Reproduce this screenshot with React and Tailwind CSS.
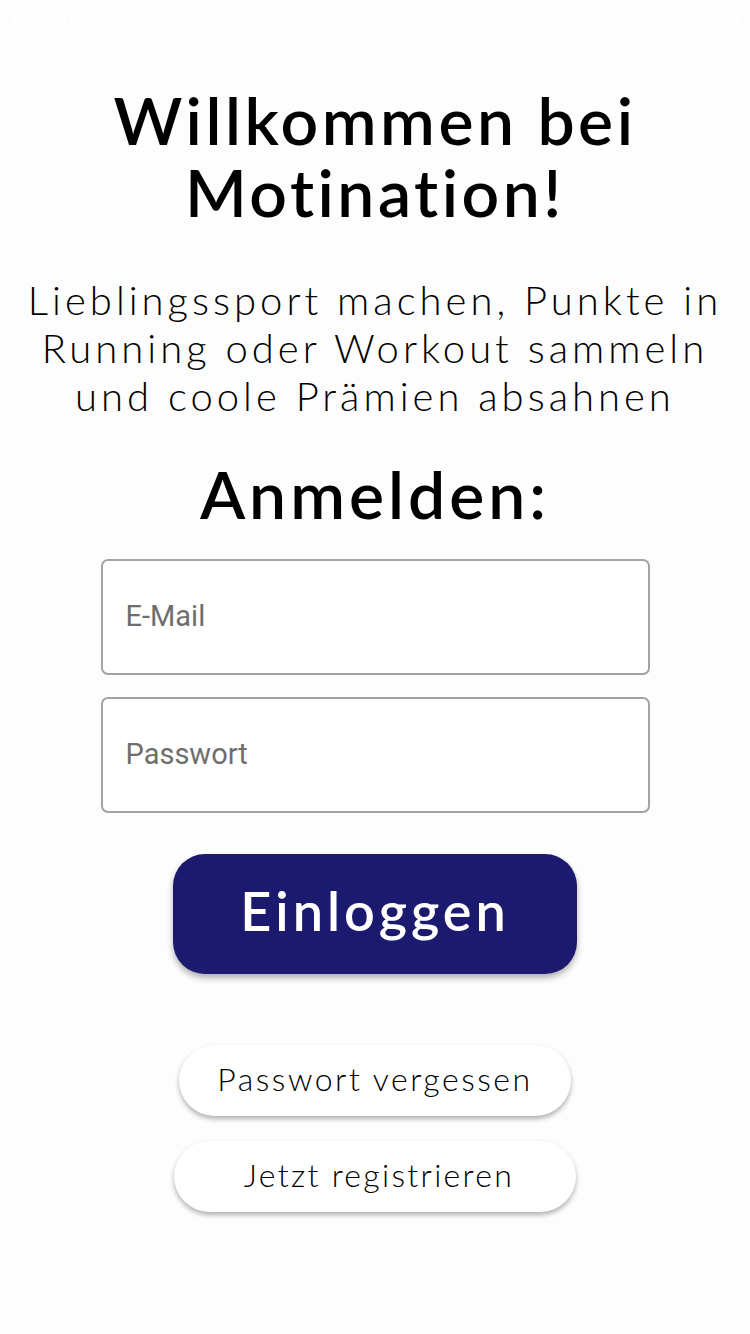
export default function App() {
  return (
    <div className="min-h-[1334px] w-[750px] bg-[#fdfdfd] flex flex-col items-center font-['Lato',sans-serif] text-black">
      {/* status bar (white on white) */}
      <div className="w-full h-10 flex items-center justify-between px-3 text-white text-[26px]">
        <span>Carrier</span>
        <span className="font-semibold">6:53 PM</span>
        <span className="w-12 h-5 border-2 border-white rounded" />
      </div>

      <h1 className="mt-[44px] text-center text-[66px] leading-[72px] font-semibold tracking-[3.5px]">
        Willkommen bei
        <br />
        Motination!
      </h1>

      <p className="mt-[48px] text-center text-[40px] leading-[48px] font-light tracking-[4px] whitespace-nowrap">
        Lieblingssport machen, Punkte in
        <br />
        Running oder Workout sammeln
        <br />
        und coole Prämien absahnen
      </p>

      <h2 className="mt-[38px] text-[66px] leading-[72px] font-semibold tracking-[4px]">Anmelden:</h2>

      <div className="mt-[29px] w-[549px] flex flex-col gap-[22px]">
        <div className="h-[116px] border-2 border-[#a3a3a3] rounded-[7px] flex items-center pl-[23px] bg-white">
          <span className="text-[29px] text-[#6e6e6e] font-['Roboto',sans-serif]">E-Mail</span>
        </div>
        <div className="h-[116px] border-2 border-[#a3a3a3] rounded-[7px] flex items-center pl-[23px] bg-white">
          <span className="text-[29px] text-[#6e6e6e] font-['Roboto',sans-serif]">Passwort</span>
        </div>
      </div>

      <button className="mt-[41px] w-[404px] h-[120px] pb-2 rounded-[32px] bg-[#1b1a6f] text-white text-[54px] font-semibold tracking-[4px] shadow-[0_4px_6px_rgba(0,0,0,0.3)]">
        Einloggen
      </button>

      <button className="mt-[71px] w-[392px] h-[71px] pb-1 rounded-full bg-white text-[32px] font-light tracking-[2.5px] shadow-[0_3px_5px_rgba(0,0,0,0.3)]">
        Passwort vergessen
      </button>

      <button className="mt-[25px] w-[402px] h-[71px] pb-1 pl-2 rounded-full bg-white text-[32px] font-light tracking-[2.3px] shadow-[0_3px_5px_rgba(0,0,0,0.3)]">
        Jetzt registrieren
      </button>
    </div>
  );
}
